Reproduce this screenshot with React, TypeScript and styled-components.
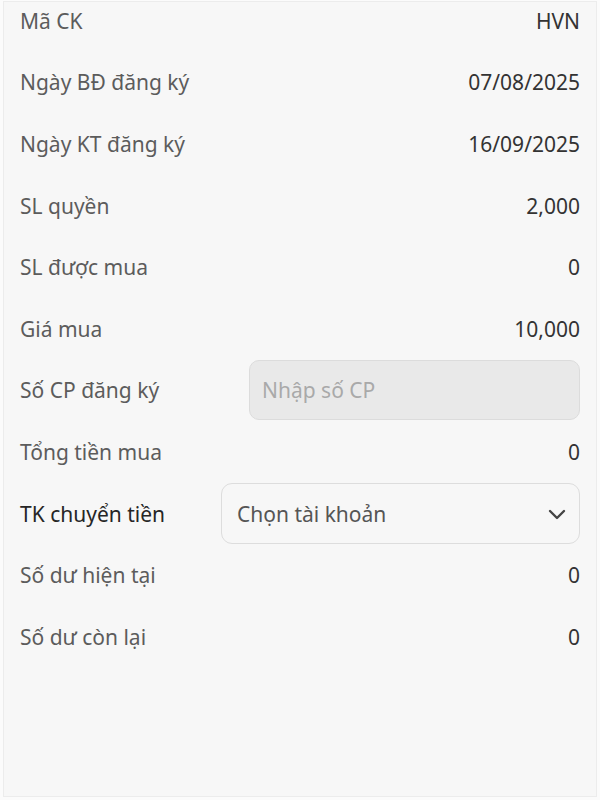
import React from "react";
import styled, { createGlobalStyle } from "styled-components";

const Global = createGlobalStyle`
  html, body { margin: 0; padding: 0; background: #fbfbfb; }
  body { font-family: "Noto Sans", "Open Sans", sans-serif; }
  * { box-sizing: border-box; }
`;

const Frame = styled.div`
  margin: 1px 3px 0 3px;
  height: 796px;
  width: 594px;
  background: #f7f7f7;
  border: 1px solid #ececec;
  overflow: hidden;
`;

const List = styled.div`
  display: grid;
  grid-auto-rows: 61.6px;
  margin-top: -12px;
  padding: 0 16px 0 16px;
`;

const Row = styled.div`
  display: flex;
  align-items: center;
  justify-content: space-between;
  gap: 16px;
`;

const Label = styled.span<{ $strong?: boolean }>`
  font-size: 21px;
  color: ${(p) => (p.$strong ? "#262626" : "#5c5c5c")};
  white-space: nowrap;
`;

const Value = styled.span`
  font-size: 21px;
  color: #333333;
`;

const Input = styled.input<{ $width: number }>`
  width: ${(p) => p.$width}px;
  height: 60px;
  border-radius: 10px;
  border: 1px solid #dcdcdc;
  background: #e9e9e9;
  padding: 0 12px;
  font-family: inherit;
  font-size: 21px;
  color: #333;
  outline: none;
  &::placeholder { color: #a9a9a9; }
`;

const Select = styled.div<{ $width: number }>`
  width: ${(p) => p.$width}px;
  height: 61px;
  border-radius: 11px;
  border: 1px solid #dddddd;
  background: #f7f7f7;
  padding: 0 10px 0 15px;
  display: flex;
  align-items: center;
  justify-content: space-between;
  font-size: 21px;
  color: #555555;
`;

const rows: [string, string][] = [
  ["Mã CK", "HVN"],
  ["Ngày BĐ đăng ký", "07/08/2025"],
  ["Ngày KT đăng ký", "16/09/2025"],
  ["SL quyền", "2,000"],
  ["SL được mua", "0"],
  ["Giá mua", "10,000"],
];

export default function App() {
  return (
    <>
      <Global />
      <Frame>
        <List>
          {rows.map(([l, v]) => (
            <Row key={l}>
              <Label>{l}</Label>
              <Value>{v}</Value>
            </Row>
          ))}
          <Row>
            <Label>Số CP đăng ký</Label>
            <Input $width={331} placeholder="Nhập số CP" />
          </Row>
          <Row>
            <Label>Tổng tiền mua</Label>
            <Value>0</Value>
          </Row>
          <Row>
            <Label $strong>TK chuyển tiền</Label>
            <Select $width={359}>
              <span>Chọn tài khoản</span>
              <svg width="24" height="24" viewBox="0 0 24 24" fill="none" stroke="#444" strokeWidth="2.4" strokeLinecap="round" strokeLinejoin="round">
                <path d="M5 9l7 7 7-7" />
              </svg>
            </Select>
          </Row>
          <Row>
            <Label>Số dư hiện tại</Label>
            <Value>0</Value>
          </Row>
          <Row>
            <Label>Số dư còn lại</Label>
            <Value>0</Value>
          </Row>
        </List>
      </Frame>
    </>
  );
}
